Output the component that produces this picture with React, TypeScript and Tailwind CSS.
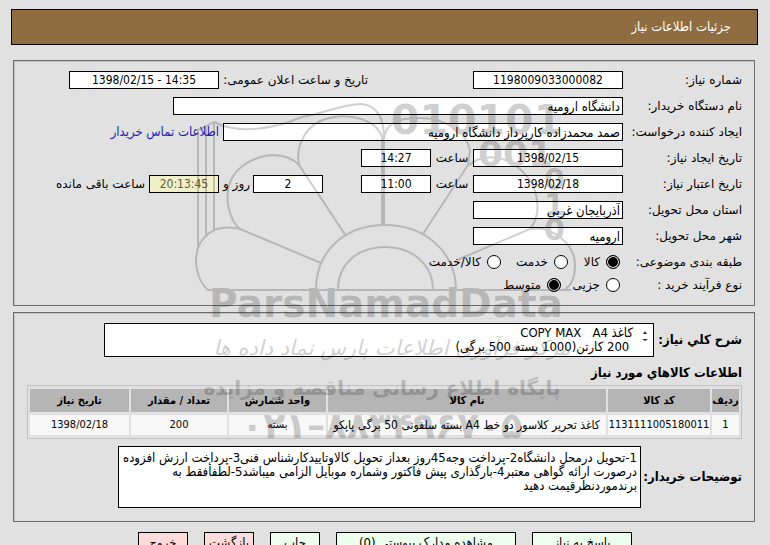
import type { ReactNode } from 'react';
import clsx from 'clsx';

interface FieldProps {
  id: string;
  value: string;
  className: string;
  label?: string;
}

interface RadioProps {
  name: string;
  label: string;
  className?: string;
  checked?: boolean;
}

const goods = [
  {
    code: '1131111005180011',
    name: 'کاغذ تحریر کلاسور دو خط A4 بسته سلفونی 50 برگی پاپکو',
    unit: 'بسته',
    amount: '200',
    date: '1398/02/18',
  },
];

const summary = 'کاغذ A4 \u200f  COPY MAX\n 200 کارتن(1000 بسته 500 برگی)';

const notes = [
  '1-تحویل درمحل دانشگاه2-پرداخت وجه45روز بعداز تحویل کالاوتاییدکارشناس فنی3-پرداخت ارزش افزوده',
  'درصورت ارائه گواهی معتبر4-بارگذاری پیش فاکتور وشماره موبایل الزامی میباشد5-لطفأفقط به',
  'برندموردنظرقیمت دهید',
].join('\n');

const narrow = "font-['DejaVu_Sans_Condensed','DejaVu_Sans',sans-serif]";
const wide = "font-['DejaVu_Sans',sans-serif] text-[12px]";
const panel = 'border border-[#6c6c6c] shadow-[inset_1px_1px_0_#c4c4c4]';
const button = 'h-[22px] shrink-0 border border-black whitespace-nowrap';

function Field({ id, value, className, label }: FieldProps) {
  return (
    <input
      id={id}
      aria-label={label}
      readOnly
      defaultValue={value}
      className={clsx('h-[18px] border border-black px-0.5 outline-none', narrow, className)}
    />
  );
}

function Row({ label, htmlFor, children }: { label: string; htmlFor: string; children: ReactNode }) {
  return (
    <div className={clsx('flex h-[18px] items-center', wide)}>
      <label htmlFor={htmlFor} className="w-[119px] shrink-0 whitespace-nowrap">
        {label}
      </label>
      {children}
    </div>
  );
}

function Radio({ name, label, className, checked }: RadioProps) {
  return (
    <label className={clsx('flex shrink-0 items-center gap-1.5 whitespace-nowrap', className)}>
      <input
        type="radio"
        name={name}
        defaultChecked={checked}
        className="size-3.5 shrink-0 appearance-none rounded-full border border-black bg-white checked:bg-black checked:shadow-[inset_0_0_0_1px_#fff]"
      />
      {label}
    </label>
  );
}

function Watermark() {
  return (
    <svg
      aria-hidden="true"
      width="400"
      height="360"
      viewBox="190 90 400 360"
      direction="ltr"
      className="pointer-events-none absolute top-[90px] left-[190px] opacity-[.18]"
    >
      <g fill="none" stroke="#000" strokeWidth="2">
        <path d="M198 247V130L214 122V231M206 237V127" />
        <path d="M214 122C236 134 272 130 302 117C326 113 346 103 362 104C378 106 384 120 384 138" />
        <path d="M571 290H208C198 281 193 264 198 248C204 232 219 224 240 229L321 263" />
        <path d="M241 230C228 220 224 195 231 180C242 157 280 146 299 165L346 236" />
        <path d="M299 165C295 146 306 123 329 118C350 113 378 119 383 140" />
        <path d="M384 140C385 124 396 118 418 118C446 117 468 134 470 151L468 165L423 234" />
        <path d="M469 165C484 152 508 156 523 172C538 186 543 213 530 229L457 260" />
        <path d="M530 229C553 225 575 245 575 265C575 277 571 286 564 290" />
        <path d="M316 290C316 248 348 225 385 225C426 225 456 253 456 290M338 290C338 262 360 247 385 247C414 247 433 266 433 290" />
        <path d="M383 138V225" strokeWidth="4" />
      </g>
      <g className="font-['DejaVu_Sans'] font-bold" fill="#000">
        <text x="391" y="134" fontSize="41">010101</text>
        <text x="478" y="166" fontSize="36">001</text>
        <text x="544" y="190" fontSize="30">0</text>
        <text x="544" y="215" fontSize="30">1</text>
        <text x="544" y="240" fontSize="30">0</text>
        <text x="386" y="317" fontSize="39" textAnchor="middle">ParsNamadData</text>
      </g>
      <g className="font-['DejaVu_Sans']" fill="#000" textAnchor="middle">
        <text x="392" y="355" fontSize="21" fontStyle="italic">مرکز فرآوری اطلاعات پارس نماد داده ها</text>
        <text x="382" y="395" fontSize="20" fontWeight="700">پایگاه اطلاع رسانی مناقصه و مزایده</text>
        <text x="382" y="438" fontSize="36" fontWeight="700">۰۲۱–۸۸۳۴۹۶۷۰۵</text>
      </g>
    </svg>
  );
}

export default function App() {
  return (
    <div
      dir="rtl"
      className={clsx(
        'relative h-screen overflow-x-hidden overflow-y-auto bg-[#e1e1e1] pt-[9px] pr-3 pl-[11px] text-[13px] leading-[14px] text-black [scrollbar-width:none]',
        narrow,
      )}
    >
      <header className="flex h-9 items-center border border-black bg-[#8f6d40] px-[26px] text-white">
        <h1>جزئیات اطلاعات نیاز</h1>
      </header>

      <main className="mt-[15px] mr-[3px] ml-0.5">
        <section className={clsx('flex flex-col gap-2 pt-2.5 pr-3 pb-[11px]', panel)}>
          <Row label="شماره نیاز:" htmlFor="need-no">
            <Field id="need-no" value="1198009033000082" className="w-[150px] bg-white text-center" />
            <label htmlFor="announced" className="mr-[105px] w-[149px] shrink-0 whitespace-nowrap">
              تاریخ و ساعت اعلان عمومی:
            </label>
            <Field id="announced" value="1398/02/15 - 14:35" className="w-[150px] bg-white text-center [direction:ltr]" />
          </Row>
          <Row label="نام دستگاه خریدار:" htmlFor="buyer">
            <Field id="buyer" value="دانشگاه ارومیه" className="w-[450px] bg-white text-[13px]" />
          </Row>
          <Row label="ایجاد کننده درخواست:" htmlFor="creator">
            <Field
              id="creator"
              value="صمد محمدزاده کارپرداز دانشگاه ارومیه"
              className="w-[400px] bg-white text-[13px]"
            />
            <a href="#contact" className={clsx('mr-1 text-[13px] whitespace-nowrap text-[#241cb8]', narrow)}>
              اطلاعات تماس خریدار
            </a>
          </Row>
          <Row label="تاریخ ایجاد نیاز:" htmlFor="created">
            <Field id="created" value="1398/02/15" className="w-[150px] bg-white text-center" />
            <label htmlFor="created-time" className="w-[42px] shrink-0 text-center">
              ساعت
            </label>
            <Field id="created-time" value="14:27" className="w-[70px] bg-white text-center" />
          </Row>
          <Row label="تاریخ اعتبار نیاز:" htmlFor="expires">
            <Field id="expires" value="1398/02/18" className="w-[150px] bg-white text-center" />
            <label htmlFor="expires-time" className="w-[42px] shrink-0 text-center">
              ساعت
            </label>
            <Field id="expires-time" value="11:00" className="w-[70px] bg-white text-center" />
            <Field id="days" label="روز" value="2" className="mr-[38px] w-[70px] bg-white text-center" />
            <label htmlFor="countdown" className="w-[34px] shrink-0 pr-[3px] whitespace-nowrap">
              روز و
            </label>
            <Field
              id="countdown"
              value="20:13:45"
              className="w-[70px] bg-[#f2f0c8] text-center text-[#5c5c48]"
            />
            <span className="mr-1 whitespace-nowrap">ساعت باقی مانده</span>
          </Row>
          <Row label="استان محل تحویل:" htmlFor="province">
            <Field id="province" value="آذربایجان غربی" className="w-[150px] bg-white text-[13px]" />
          </Row>
          <Row label="شهر محل تحویل:" htmlFor="city">
            <Field id="city" value="ارومیه" className="w-[150px] bg-white text-[13px]" />
          </Row>
          <div
            role="radiogroup"
            aria-label="طبقه بندی موضوعی"
            className={clsx('flex h-[18px] items-center', wide)}
          >
            <span className="w-[122px] shrink-0">طبقه بندی موضوعی:</span>
            <Radio name="category" label="کالا" className="w-[52px]" checked />
            <Radio name="category" label="خدمت" className="w-[67px]" />
            <Radio name="category" label="کالا/خدمت" />
          </div>
          <div
            role="radiogroup"
            aria-label="نوع فرآیند خرید"
            className={clsx('-mt-[3px] flex h-[18px] items-center', wide)}
          >
            <span className="w-[122px] shrink-0">نوع فرآیند خرید :</span>
            <Radio name="process" label="جزیی" className="w-[59px]" />
            <Radio name="process" label="متوسط" checked />
          </div>
        </section>

        <section className={clsx('mt-1.5 pt-2.5 pr-3 pb-[13px] pl-[13px]', panel)}>
          <div className="flex items-center">
            <label htmlFor="summary" className="w-[88px] shrink-0 font-bold whitespace-nowrap">
              شرح كلي نياز:
            </label>
            <div className="flex h-[34px] w-[550px] items-start border border-black bg-white pr-1">
              <svg width="8" height="22" viewBox="0 0 8 22" className="mt-0.5 shrink-0">
                <path d="M4 5 6 8H2zM1 13H7L4 15z" fill="#333" />
              </svg>
              <textarea
                id="summary"
                readOnly
                defaultValue={summary}
                className="h-8 grow resize-none overflow-hidden bg-transparent pt-0.5 pr-2 outline-none"
              />
            </div>
          </div>

          <h2 className="mt-[9px] font-bold">اطلاعات كالاهاي مورد نياز</h2>
          <table className="mt-[5px] w-full table-fixed border-separate border-spacing-x-0.5 border-spacing-y-[3px] border border-[#c2c2c2] text-center text-[11px] whitespace-nowrap">
            <colgroup>
              <col className="w-[27px]" />
              <col className="w-[102px]" />
              <col />
              <col className="w-[97px]" />
              <col className="w-24" />
              <col className="w-[99px]" />
            </colgroup>
            <thead>
              <tr className="h-[23px] bg-[#b5b5b5]">
                <th>ردیف</th>
                <th>کد کالا</th>
                <th>نام کالا</th>
                <th>واحد شمارش</th>
                <th>تعداد / مقدار</th>
                <th>تاریخ نیاز</th>
              </tr>
            </thead>
            <tbody>
              {goods.map((item, index) => (
                <tr key={item.code} className="h-5 bg-[#f8f8f8]">
                  <td>{index + 1}</td>
                  <td>{item.code}</td>
                  <td className="pr-1.5 text-right text-[12px]">{item.name}</td>
                  <td>{item.unit}</td>
                  <td>{item.amount}</td>
                  <td>{item.date}</td>
                </tr>
              ))}
            </tbody>
          </table>

          <div className="mt-[7px] flex items-center">
            <label htmlFor="notes" className="w-[101px] shrink-0 font-bold whitespace-nowrap">
              توضیحات خریدار:
            </label>
            <textarea
              id="notes"
              readOnly
              defaultValue={notes}
              className="h-[62px] w-[523px] resize-none overflow-hidden border border-black bg-white px-[3px] pt-1 outline-none"
            />
          </div>
        </section>

        <div className="mt-2.5 mr-[123px] flex gap-4">
          <button type="button" className={clsx('w-[100px] bg-[#edffed]', button)}>
            پاسخ به نیاز
          </button>
          <button type="button" className={clsx('w-[180px] bg-[#edffed]', button)}>
            مشاهده مدارک پیوستی (0)
          </button>
          <button type="button" className={clsx('w-[50px] bg-[#edffed]', button)}>
            چاپ
          </button>
          <button type="button" className={clsx('w-[50px] bg-[#ffdcdc]', button)}>
            بازگشت
          </button>
          <button type="button" className={clsx('w-[50px] bg-[#ffdcdc]', button)}>
            خروج
          </button>
        </div>
      </main>

      <Watermark />
    </div>
  );
}
